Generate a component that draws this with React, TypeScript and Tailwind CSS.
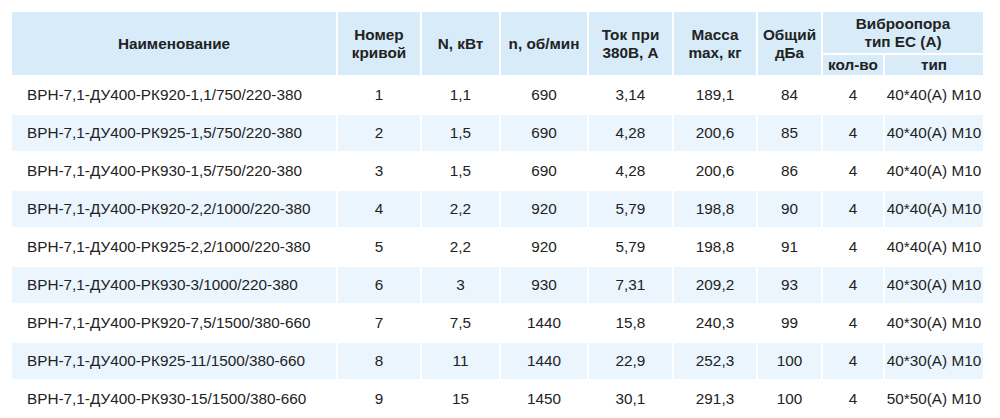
import React from "react";

const rows = [
  ["ВРН-7,1-ДУ400-РК920-1,1/750/220-380", "1", "1,1", "690", "3,14", "189,1", "84", "4", "40*40(A) M10"],
  ["ВРН-7,1-ДУ400-РК925-1,5/750/220-380", "2", "1,5", "690", "4,28", "200,6", "85", "4", "40*40(A) M10"],
  ["ВРН-7,1-ДУ400-РК930-1,5/750/220-380", "3", "1,5", "690", "4,28", "200,6", "86", "4", "40*40(A) M10"],
  ["ВРН-7,1-ДУ400-РК920-2,2/1000/220-380", "4", "2,2", "920", "5,79", "198,8", "90", "4", "40*40(A) M10"],
  ["ВРН-7,1-ДУ400-РК925-2,2/1000/220-380", "5", "2,2", "920", "5,79", "198,8", "91", "4", "40*40(A) M10"],
  ["ВРН-7,1-ДУ400-РК930-3/1000/220-380", "6", "3", "930", "7,31", "209,2", "93", "4", "40*30(A) M10"],
  ["ВРН-7,1-ДУ400-РК920-7,5/1500/380-660", "7", "7,5", "1440", "15,8", "240,3", "99", "4", "40*30(A) M10"],
  ["ВРН-7,1-ДУ400-РК925-11/1500/380-660", "8", "11", "1440", "22,9", "252,3", "100", "4", "40*30(A) M10"],
  ["ВРН-7,1-ДУ400-РК930-15/1500/380-660", "9", "15", "1450", "30,1", "291,3", "100", "4", "50*50(A) M10"],
];

const widths = [326, 84, 79, 88, 85, 84, 65, 62, 100];

const th = "border-2 border-white bg-[#d7ebf9] font-bold text-center align-middle leading-[18px]";

export default function App() {
  return (
    <div
      className="w-[1000px] h-[418px] overflow-hidden bg-white pl-[10px] pt-[10px] text-[15.3px] text-[#222]"
      style={{ fontFamily: '"Liberation Sans", Arial, sans-serif' }}
    >
      <table className="border-collapse table-fixed w-[975px]">
        <colgroup>
          {widths.map((w, i) => (
            <col key={i} style={{ width: w }} />
          ))}
        </colgroup>
        <thead>
          <tr className="h-[43px]">
            <th rowSpan={2} className={th}>Наименование</th>
            <th rowSpan={2} className={th}>Номер<br />кривой</th>
            <th rowSpan={2} className={th}>N, кВт</th>
            <th rowSpan={2} className={th}>n, об/мин</th>
            <th rowSpan={2} className={th}>Ток при<br />380В, А</th>
            <th rowSpan={2} className={th}>Масса<br />max, кг</th>
            <th rowSpan={2} className={th}>Общий<br />дБа</th>
            <th colSpan={2} className={`${th} pt-[1px]`}>Виброопора<br />тип ЕС (А)</th>
          </tr>
          <tr className="h-[22px]">
            <th className={th}>кол-во</th>
            <th className={th}>тип</th>
          </tr>
        </thead>
        <tbody>
          {rows.map((r, i) => (
            <tr key={i} className={`h-[38px] ${i % 2 === 1 ? "bg-[#eaf5fe]" : "bg-white"}`}>
              {r.map((c, j) => (
                <td
                  key={j}
                  className={`border-2 border-white align-middle whitespace-nowrap ${j === 0 ? "text-left pl-[15px]" : "text-center"}`}
                >
                  {c}
                </td>
              ))}
            </tr>
          ))}
        </tbody>
      </table>
    </div>
  );
}
